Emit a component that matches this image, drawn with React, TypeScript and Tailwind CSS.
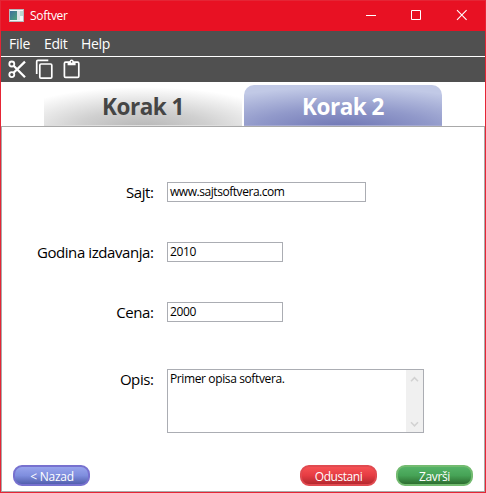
import React from "react";

function AppIcon() {
  return (
    <svg className="block" width="15" height="13" viewBox="0 0 15 13">
      <defs>
        <linearGradient id="app-pane" x1="0" y1="0" x2="1" y2="1">
          <stop offset="0" stopColor="#3f6f9c" />
          <stop offset="1" stopColor="#4fa37c" />
        </linearGradient>
      </defs>
      <rect x="0" y="0" width="15" height="13" fill="#b5b9bc" />
      <rect x="1" y="1" width="13" height="11" fill="#f4f6f7" />
      <rect x="1" y="2" width="7" height="9" fill="url(#app-pane)" />
      <rect x="8" y="2" width="3" height="9" fill="#dfe3e6" />
      <rect x="11" y="2" width="3" height="5" fill="#b9d8cf" />
    </svg>
  );
}

function TitleBar() {
  return (
    <header className="flex h-[30px] items-center bg-[#e81123] pb-px pl-2 text-white">
      <AppIcon />
      <span className="ml-1.5 flex-1 pt-px text-[12px] leading-4 tracking-[-0.3px]">Softver</span>
      <svg className="mt-px block" width="120" height="30" viewBox="0 0 120 30" fill="none" stroke="#fff">
        <path d="M1 14.5h10" />
        <path d="M46.5 9.5h9v9h-9z" />
        <path d="M92 9.2l9.6 9.6M101.6 9.2L92 18.8" strokeWidth="1.1" />
      </svg>
    </header>
  );
}

function MenuBar() {
  return (
    <nav className="flex h-[25px] items-center bg-[#505050] pl-2 text-[14px] leading-5 text-white">
      <span className="w-[35px] tracking-[-0.3px]">File</span>
      <span className="w-[37px] tracking-[-0.4px]">Edit</span>
      <span className="tracking-[-0.3px]">Help</span>
    </nav>
  );
}

function Toolbar() {
  return (
    <div className="mt-px h-[25px] bg-[#505050]">
      <svg className="block" width="90" height="25" viewBox="0 0 90 25" fill="none" stroke="#fff">
        <g strokeWidth="1.8">
          <circle cx="10.8" cy="7" r="2.5" />
          <circle cx="10.8" cy="17.6" r="2.5" />
          <path d="M12.6 8.8L24 20.2M12.6 15.8L24 4.6" strokeWidth="2.3" />
        </g>
        <rect x="38.8" y="7" width="12" height="14.2" rx="1.2" strokeWidth="1.7" />
        <path d="M35.7 17V4.6q0-1.2 1.2-1.2H47.3" strokeWidth="1.7" />
        <rect x="63.4" y="5.2" width="14.4" height="15.2" rx="1.2" strokeWidth="1.7" />
        <path d="M66.6 5v3.2h8V5h-2a2 2 0 0 0-4 0z" fill="#fff" stroke="none" />
        <circle cx="70.6" cy="4.4" r="2" fill="#fff" stroke="none" />
        <circle cx="70.6" cy="4.9" r="0.8" fill="#505050" stroke="none" />
      </svg>
    </div>
  );
}

function Tabs() {
  return (
    <div className="flex h-[44px] gap-[2px] pt-[3px] pl-[43px] text-[22.5px] leading-[30px] font-bold tracking-[-0.5px]">
      <div className="flex h-[41px] w-[198px] justify-center border-b border-[#dedede] bg-[radial-gradient(ellipse_75%_105%_at_50%_110%,#b5b5b5_0%,#d0d0d0_45%,#ffffff_100%)] pt-[7px] text-[#454545]">
        <span>Korak 1</span>
      </div>
      <div className="flex h-[41px] w-[198px] justify-center rounded-t-[10px] border-b border-[#a5a9d2] bg-[radial-gradient(ellipse_90%_105%_at_50%_110%,#6d74b3_0%,#9199ca_50%,#c1c9e6_100%)] pt-[7px] text-white">
        <span>Korak 2</span>
      </div>
    </div>
  );
}

function Label({ children }: { children: string }) {
  return (
    <span className="w-[152px] pr-[0.5px] text-right text-[15px] leading-5 tracking-[-0.42px] text-black">
      {children}
    </span>
  );
}

function Field({ label, value, wide = false }: { label: string; value: string; wide?: boolean }) {
  return (
    <div className="flex h-5 items-center gap-[13px]">
      <Label>{label}</Label>
      <div
        className={`h-5 border border-[#abadb3] pl-[2px] text-[12px] leading-[17px] text-black ${
          wide ? "w-[199px] tracking-[-0.45px]" : "w-[116px] tracking-[-0.4px]"
        }`}
      >
        {value}
      </div>
    </div>
  );
}

function Description() {
  return (
    <div className="mt-[47px] flex items-start gap-[13px]">
      <Label>Opis:</Label>
      <div className="flex h-16 w-[257px] justify-between border border-[#abadb3]">
        <p className="pl-[2px] text-[12px] leading-[18px] tracking-[-0.38px] text-black">
          Primer opisa softvera.
        </p>
        <svg className="block" width="17" height="62" viewBox="0 0 17 62" fill="none" stroke="#d2d2d2" strokeWidth="1.6">
          <rect width="17" height="62" fill="#f0f0f0" stroke="none" />
          <path d="M5 11.2l3.5-3.5 3.5 3.5M5 52.3l3.5 3.5 3.5-3.5" />
        </svg>
      </div>
    </div>
  );
}

const BUTTON =
  "flex h-[21px] w-[77px] items-center justify-center rounded-[9px] border-2 bg-origin-border text-[12px] leading-4 text-white";

function Buttons() {
  return (
    <footer className="mt-8 flex pl-[11px]">
      <button className={`${BUTTON} border-[#7771cf] bg-linear-to-b from-[#9da9ef] via-[#7f8ede] to-[#4955a3] pl-px tracking-[-0.25px]`}>
        <span className="mt-[2px]">&lt; Nazad</span>
      </button>
      <button className={`${BUTTON} ml-[210px] border-[#e04a50] bg-linear-to-b from-[#fa5557] via-[#e63c43] to-[#a9242a] tracking-[-0.45px]`}>
        <span className="mt-[2px]">Odustani</span>
      </button>
      <button className={`${BUTTON} ml-[19px] border-[#73bb70] bg-linear-to-b from-[#58b66b] via-[#46a356] to-[#286328] tracking-[-0.35px]`}>
        <span className="mt-[2px]">Završi</span>
      </button>
    </footer>
  );
}

export default function App() {
  return (
    <div className="flex h-[493px] w-[486px] flex-col overflow-hidden border border-[#e52535] bg-white font-['Open_Sans','Noto_Sans',sans-serif]">
      <TitleBar />
      <MenuBar />
      <Toolbar />
      <Tabs />
      <main className="flex h-[366px] flex-col border border-[#a9a9a9] pt-[55px]">
        <div className="flex flex-col gap-10">
          <Field label="Sajt:" value="www.sajtsoftvera.com" wide />
          <Field label="Godina izdavanja:" value="2010" />
          <Field label="Cena:" value="2000" />
        </div>
        <Description />
        <Buttons />
      </main>
    </div>
  );
}
